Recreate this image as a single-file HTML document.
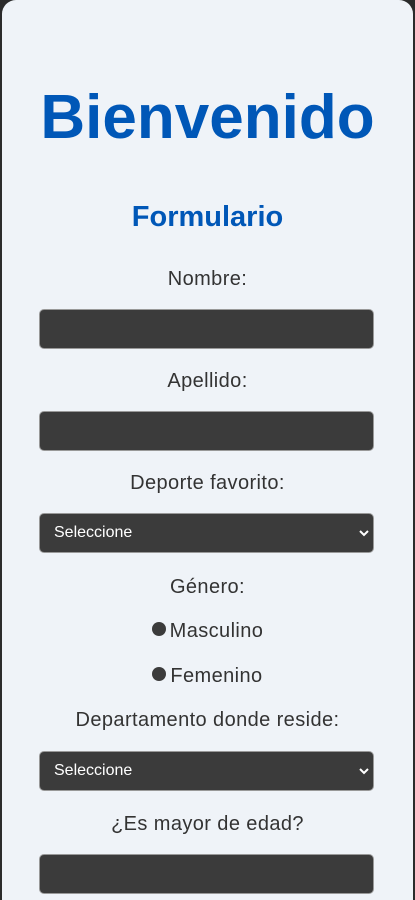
<!DOCTYPE html>
<html><head><meta charset="utf-8"><style>
html,body{margin:0;padding:0;width:415px;height:882px;overflow:hidden;background:#2b2b2b;}
.card{position:absolute;left:2px;top:0;width:411px;height:900px;background:#eff3f8;border-radius:14px 14px 0 0;font-family:"Liberation Sans",sans-serif;}
.t{position:absolute;left:0;width:411px;text-align:center;color:#333;font-size:20px;line-height:22px;letter-spacing:0.4px;}
h1{position:absolute;left:0;width:411px;margin:0;text-align:center;color:#0057b7;font-size:62px;line-height:80px;top:78px;font-weight:bold;}
h2{position:absolute;left:0;width:411px;margin:0;text-align:center;color:#0057b7;font-size:29px;line-height:32px;top:201px;font-weight:bold;}
.in{position:absolute;left:37px;width:335px;height:40px;background:#3b3b3b;border-radius:5px;border:1px solid #999;box-sizing:border-box;}
.sel{color:#fff;font-size:16px;line-height:38px;padding-left:14px;}
.sel svg{position:absolute;right:4px;top:15px;}
.r{display:inline-block;width:14px;height:14px;border-radius:50%;background:#3b3b3b;vertical-align:1px;margin-right:4px;}
</style></head><body><div class="card">
<h1>Bienvenido</h1>
<h2>Formulario</h2>
<div class="t" style="top:268px">Nombre:</div>
<div class="in" style="top:309px"></div>
<div class="t" style="top:370px">Apellido:</div>
<div class="in" style="top:411px"></div>
<div class="t" style="top:472px">Deporte favorito:</div>
<div class="in sel" style="top:513px">Seleccione<svg width="10" height="8" viewBox="0 0 10 8"><path d="M1 2l4 4 4-4" stroke="#fff" stroke-width="2" fill="none"/></svg></div>
<div class="t" style="top:576px">Género:</div>
<div class="t" style="top:620px"><span class="r"></span>Masculino</div>
<div class="t" style="top:665px"><span class="r"></span>Femenino</div>
<div class="t" style="top:709px">Departamento donde reside:</div>
<div class="in sel" style="top:751px">Seleccione<svg width="10" height="8" viewBox="0 0 10 8"><path d="M1 2l4 4 4-4" stroke="#fff" stroke-width="2" fill="none"/></svg></div>
<div class="t" style="top:813px">¿Es mayor de edad?</div>
<div class="in" style="top:854px"></div>
</div></body></html>
